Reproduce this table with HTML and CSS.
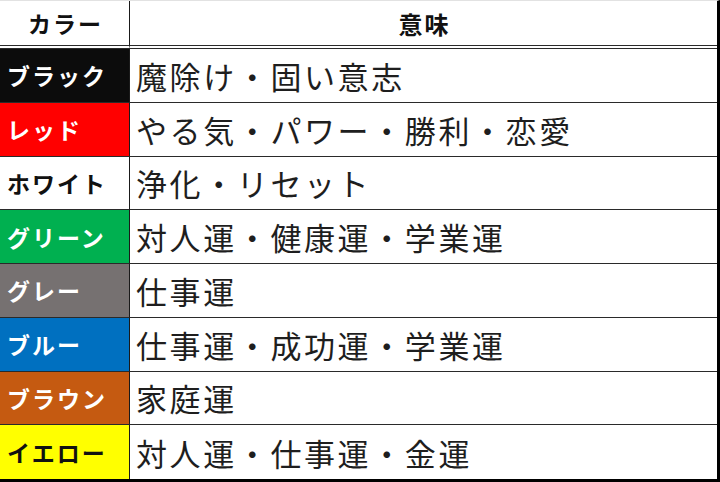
FILE: index.html
```html
<!DOCTYPE html>
<html lang="ja">
<head>
<meta charset="utf-8">
<title>カラーと意味</title>
<link rel="stylesheet" href="styles.css">
</head>
<body>
<div class="sheet">
  <div class="cell head name">カラー</div>
  <div class="cell head meaning">意味</div>

  <div class="cell name c-black">ブラック</div>
  <div class="cell meaning">魔除け・固い意志</div>

  <div class="cell name c-red">レッド</div>
  <div class="cell meaning">やる気・パワー・勝利・恋愛</div>

  <div class="cell name c-white">ホワイト</div>
  <div class="cell meaning">浄化・リセット</div>

  <div class="cell name c-green">グリーン</div>
  <div class="cell meaning">対人運・健康運・学業運</div>

  <div class="cell name c-gray">グレー</div>
  <div class="cell meaning">仕事運</div>

  <div class="cell name c-blue">ブルー</div>
  <div class="cell meaning">仕事運・成功運・学業運</div>

  <div class="cell name c-brown">ブラウン</div>
  <div class="cell meaning">家庭運</div>

  <div class="cell name c-yellow last">イエロー</div>
  <div class="cell meaning last">対人運・仕事運・金運</div>
</div>
</body>
</html>
```

FILE: styles.css
```css
html, body {
  margin: 0;
  padding: 0;
  background: #ffffff;
}

.sheet {
  box-sizing: border-box;
  width: 720px;
  height: 482px;
  display: grid;
  grid-template-columns: 130px 1fr;
  grid-template-rows: 48px repeat(8, 1fr);
  border-top: 1px solid #e2e2e2;
  border-right: 3px solid #000;
  border-bottom: 3px solid #000;
  font-family: "Noto Sans CJK JP", "Noto Sans", sans-serif;
  color: #1e1e1e;
}

.cell {
  box-sizing: border-box;
  display: flex;
  align-items: center;
  border-bottom: 1px solid #2a2a2a;
  white-space: nowrap;
  overflow: hidden;
}

.cell.last {
  border-bottom: none;
}

.name {
  border-right: 1px solid #1a1a1a;
  padding-left: 7px;
  font-size: 23px;
  font-weight: 700;
  letter-spacing: 2px;
  color: #ffffff;
}

.meaning {
  padding-left: 6px;
  font-size: 31px;
  font-weight: 400;
  letter-spacing: 2.6px;
}

.head {
  border-bottom: 4px double #2a2a2a;
  justify-content: center;
  padding-left: 2px;
  font-size: 23px;
  font-weight: 700;
  letter-spacing: 2px;
  color: #111;
}

.head.meaning {
  font-size: 24px;
  letter-spacing: 2px;
}

.c-black  { background: #0c0c0c; }
.c-red    { background: #ff0000; }
.c-white  { background: #ffffff; color: #111; }
.c-green  { background: #00b050; }
.c-gray   { background: #767171; }
.c-blue   { background: #0070c0; }
.c-brown  { background: #c55a11; }
.c-yellow { background: #ffff00; color: #111; }
```
